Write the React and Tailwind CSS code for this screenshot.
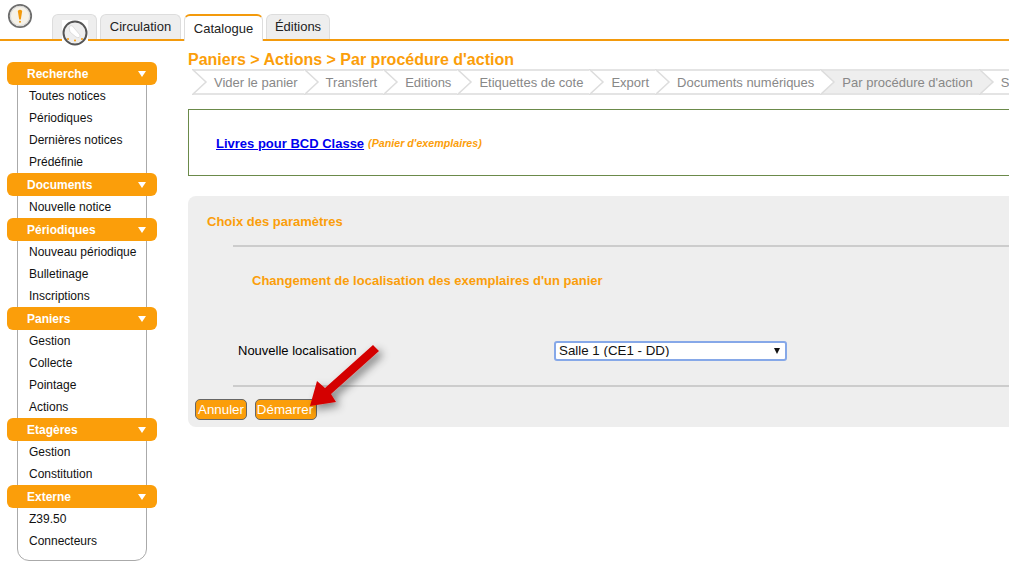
const tabs = [
  { label: 'Circulation', width: 'w-[81px]' },
  { label: 'Catalogue', width: 'w-[79px]' },
  { label: 'Éditions', width: 'w-[64px]' },
];

const menu = [
  { title: 'Recherche', items: ['Toutes notices', 'Périodiques', 'Dernières notices', 'Prédéfinie'] },
  { title: 'Documents', items: ['Nouvelle notice'] },
  { title: 'Périodiques', items: ['Nouveau périodique', 'Bulletinage', 'Inscriptions'] },
  { title: 'Paniers', items: ['Gestion', 'Collecte', 'Pointage', 'Actions'] },
  { title: 'Etagères', items: ['Gestion', 'Constitution'] },
  { title: 'Externe', items: ['Z39.50', 'Connecteurs'] },
];

const crumbs = ['Vider le panier', 'Transfert', 'Editions', 'Etiquettes de cote', 'Export', 'Documents numériques', "Par procédure d'action", 'S'];

function LogoAlert() {
  return (
    <svg width="26" height="26" viewBox="0 0 26 26" className="shrink-0">
      <circle cx="13" cy="13" r="11.2" fill="#f6f2e8" stroke="#6e6e6e" strokeWidth="1.8" />
      <circle cx="13" cy="13" r="9.6" fill="none" stroke="#d8d8d8" strokeWidth="1" />
      <path d="M10.8 8 Q13 5.5 15.2 8 L13.8 16.5 H12.2 Z" fill="#f39a0c" />
      <circle cx="13" cy="18.8" r="1" fill="#f39a0c" />
    </svg>
  );
}

function LogoClock() {
  return (
    <svg width="28" height="28" viewBox="0 0 28 28" className="absolute left-[61px] top-[19px]">
      <rect x="1" y="1" width="26" height="21" fill="#fff" />
      <circle cx="14" cy="14" r="11.5" fill="#eee" stroke="#555" strokeWidth="2" />
      <path d="M8 8 Q11 5 13 9 L19 16 Q19 20 15 18 L9 13 Z" fill="#fff" stroke="#ccc" strokeWidth="0.6" />
      <circle cx="14" cy="21.5" r="1" fill="#f39a0c" />
      <circle cx="7" cy="20" r="1" fill="#f39a0c" />
      <circle cx="21" cy="20" r="1" fill="#f39a0c" />
    </svg>
  );
}

function Chevron({ fill }) {
  return (
    <svg width="16" height="26" viewBox="0 0 16 26" className="absolute left-0 top-[-2px]">
      <path d="M0 0 L14 13 L0 26 Z" fill={fill} />
      <path d="M0 0 L14 13 L0 26" fill="none" stroke="#ddd" strokeWidth="1.5" />
    </svg>
  );
}

function Arrow() {
  return (
    <svg width="120" height="110" viewBox="0 0 120 110" className="absolute left-[290px] top-[335px]">
      <defs>
        <filter id="arrowShadow" x="-30%" y="-30%" width="170%" height="170%">
          <feDropShadow dx="4" dy="4" stdDeviation="4" floodColor="#000" floodOpacity="0.45" />
        </filter>
      </defs>
      <path d="M83 10 L89 16 L41 59 L46 67 L20 71 L27 46 L35 53 Z" fill="#d40000" filter="url(#arrowShadow)" />
    </svg>
  );
}

export default function App() {
  return (
    <div className="relative h-[563px] w-[1009px] overflow-hidden bg-white font-['Liberation_Sans',Arial,sans-serif] text-[13px] text-black">
      <header className="relative flex h-[41px] border-b-2 border-[#f39a0c]">
        <div className="ml-[7px] mt-[3px]"><LogoAlert /></div>
        <div className="ml-[19px] mt-[14px] flex h-[27px] gap-[3px]">
          <div className="h-[25px] w-[45px] rounded-t-md border border-b-0 border-[#ddd] bg-[#eee]" />
          {tabs.map(t => (
            t.label === 'Catalogue'
              ? <div key={t.label} className={`z-10 flex h-[27px] items-center justify-center rounded-t-md border-x border-t-2 border-x-[#ddd] border-t-[#f39a0c] bg-white text-[#222] ${t.width}`}>{t.label}</div>
              : <div key={t.label} className={`flex h-[25px] items-center justify-center rounded-t-md border border-b-0 border-[#ddd] bg-[#eee] text-[#222] ${t.width}`}>{t.label}</div>
          ))}
        </div>
        <LogoClock />
      </header>

      <div className="flex">
        <aside className="ml-[7px] mt-[21px] w-[150px] shrink-0">
          <div className="relative">
            <div className="absolute bottom-0 left-[10px] top-0 w-[130px] rounded-b-xl border border-[#aaa]" />
            <div className="relative pb-[9px]">
              {menu.map(group => (
                <div key={group.title}>
                  <div className="flex h-[23px] items-center justify-between rounded-md bg-[#fb9e0a] pl-[20px] pr-[11px] text-[12px] font-bold text-white">
                    <span>{group.title}</span>
                    <span className="h-0 w-0 border-x-[4px] border-t-[6px] border-x-transparent border-t-white" />
                  </div>
                  {group.items.map(item => (
                    <div key={item} className="h-[22px] pl-[22px] text-[12px] leading-[22px] text-[#111]">{item}</div>
                  ))}
                </div>
              ))}
            </div>
          </div>
        </aside>

        <main className="ml-[31px] mr-[-20px] min-w-0 flex-1">
          <h1 className="mt-[10px] text-[16px] font-bold leading-[18px] text-[#fb9e0a]">Paniers &gt; Actions &gt; Par procédure d'action</h1>

          <ul className="ml-[4px] flex h-[26px] whitespace-nowrap border-y-2 border-[#e4e4e4] text-[13px] text-[#888]">
            {crumbs.map((c, i) => (
              <li key={c} className={`relative h-[22px] pl-[22px] pr-[6px] leading-[24px] ${i === 6 ? 'bg-[#eee]' : ''}`}>
                <Chevron fill={i === 7 ? '#eee' : '#fff'} />
                {c}
              </li>
            ))}
          </ul>

          <div className="mt-[14px] flex h-[67px] items-center gap-[4px] border border-[#6b8a4a] pl-[27px] pt-[2px]">
            <a className="font-bold text-[#0000ee] underline" href="#livres">Livres pour BCD Classe</a>
            <span className="text-[10.7px] font-bold italic text-[#fb9e0a]">(Panier d'exemplaires)</span>
          </div>

          <section className="mt-[20px] h-[231px] rounded-l-lg bg-[#eee] pt-[18px]">
            <h3 className="ml-[19px] text-[13px] font-bold leading-[16px] text-[#fb9e0a]">Choix des paramètres</h3>
            <hr className="ml-[45px] mt-[15px] border-t-2 border-[#ccc]" />
            <h3 className="ml-[64px] mt-[26px] text-[13px] font-bold leading-[16px] text-[#fb9e0a]">Changement de localisation des exemplaires d'un panier</h3>
            <div className="mt-[52px] flex h-[20px] items-center">
              <label className="ml-[50px] w-[316px] text-[13px]">Nouvelle localisation</label>
              <div className="relative ml-[-0.5px] w-[233px]">
                <select className="h-[20px] w-full appearance-none rounded-[3px] border-2 border-[#86a8e8] bg-white pb-[2px] pl-[3.5px] text-[13.33px] leading-none text-[#111]" defaultValue="salle1">
                  <option value="salle1">Salle 1 (CE1 - DD)</option>
                </select>
                <span className="absolute right-[7px] top-[7px] h-0 w-0 border-x-[3.5px] border-t-[6px] border-x-transparent border-t-[#111]" />
              </div>
            </div>
            <hr className="ml-[45px] mt-[24px] border-t-2 border-[#ccc]" />
            <div className="ml-[7px] mt-[12px] flex gap-[8px]">
              <button className="h-[21px] w-[52px] rounded-[5px] border border-[#666] bg-[#fb9e0a] pb-[1px] text-[13.33px] text-white">Annuler</button>
              <button className="h-[21px] w-[62px] rounded-[5px] border border-[#666] bg-[#fb9e0a] pb-[1px] pr-[2px] text-[13.33px] text-white">Démarrer</button>
            </div>
          </section>
        </main>
      </div>

      <Arrow />
    </div>
  );
}
